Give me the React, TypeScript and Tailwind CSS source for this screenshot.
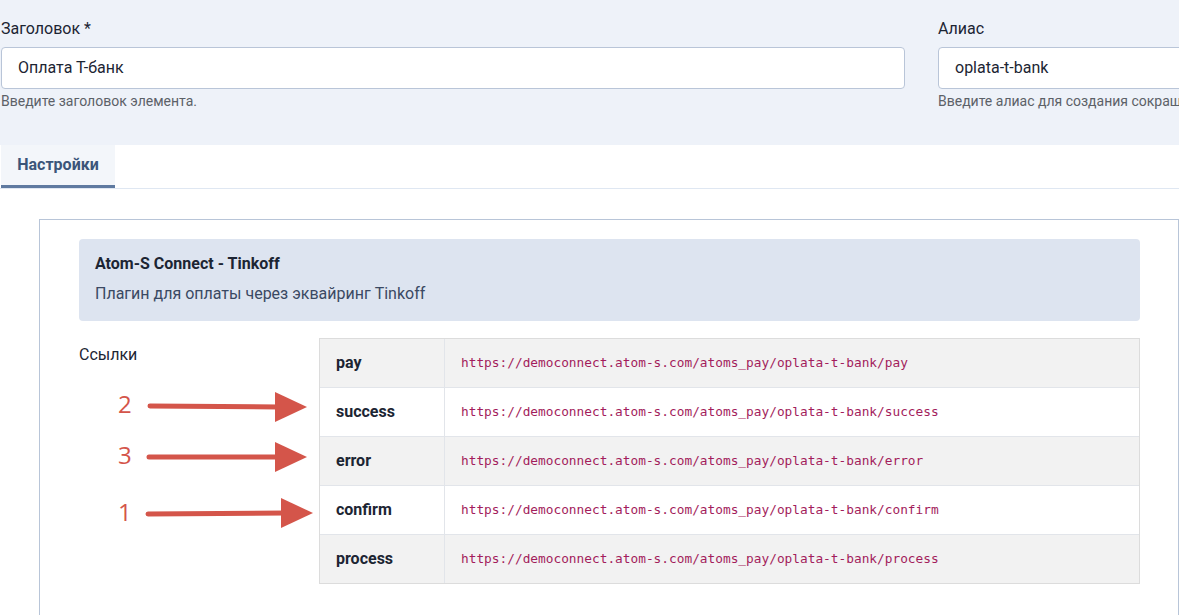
import React from "react";

const links = ["pay", "success", "error", "confirm", "process"];
const base = "https://democonnect.atom-s.com/atoms_pay/oplata-t-bank/";

function Annotations() {
  const red = "#d4554a";
  const arrows = [
    { n: "2", ny: 413, x1: 150, y1: 406, x2: 307, y2: 407, nx: 118 },
    { n: "3", ny: 464, x1: 149, y1: 457, x2: 307, y2: 457, nx: 118 },
    { n: "1", ny: 521, x1: 148, y1: 514, x2: 313, y2: 513, nx: 118 },
  ];
  return (
    <svg
      className="absolute left-0 top-0 pointer-events-none"
      width={1179}
      height={615}
      viewBox="0 0 1179 615"
    >
      {arrows.map((a) => (
        <g key={a.n}>
          <text
            x={a.nx}
            y={a.ny}
            fill={red}
            fontSize={24}
            fontFamily="'Open Sans', sans-serif"
          >
            {a.n}
          </text>
          <line
            x1={a.x1}
            y1={a.y1}
            x2={a.x2 - 28}
            y2={a.y2}
            stroke={red}
            strokeWidth={5}
            strokeLinecap="round"
          />
          <polygon
            points={`${a.x2 - 32},${a.y2 - 15} ${a.x2},${a.y2} ${a.x2 - 32},${a.y2 + 15}`}
            fill={red}
          />
        </g>
      ))}
    </svg>
  );
}

export default function App() {
  return (
    <div className="relative w-[1179px] h-[615px] overflow-hidden bg-white font-['Roboto',sans-serif] text-[#22262a]">
      {/* header fields */}
      <div className="bg-[#eef2f9] h-[145px] pt-[18px] pl-px flex gap-[33px]">
        <div className="w-[904px] shrink-0">
          <div className="text-[16px] leading-[22px] text-[#1c2533]">Заголовок *</div>
          <div className="mt-[7px] h-[42px] bg-white border border-[#b9c5d8] rounded-[4px] flex items-center px-[16px] text-[16px] text-[#1c2533]">
            Оплата Т-банк
          </div>
          <div className="mt-[2px] text-[14px] text-[#5c6168]">Введите заголовок элемента.</div>
        </div>
        <div className="w-[320px] shrink-0">
          <div className="text-[16px] leading-[22px] text-[#1c2533]">Алиас</div>
          <div className="mt-[7px] h-[42px] bg-white border border-[#b9c5d8] rounded-[4px] flex items-center px-[16px] text-[16px] text-[#1c2533]">
            oplata-t-bank
          </div>
          <div className="mt-[2px] text-[14px] text-[#5c6168] whitespace-nowrap">
            Введите алиас для создания сокращ
          </div>
        </div>
      </div>

      {/* tabs */}
      <div className="flex pl-px border-b border-[#dfe7f2]">
        <div className="w-[114px] h-[43px] bg-[#f3f6fa] border-b-[3px] border-[#5f7aa0] flex items-center justify-center text-[16px] font-bold text-[#3b5579]">
          Настройки
        </div>
      </div>

      {/* panel */}
      <div className="ml-[39px] mt-[30px] border-t border-l border-r border-[#b8c5d8] pt-[19px] pl-[39px] pr-[38px] h-[400px]">
        <div className="bg-[#dde4f0] rounded-[4px] h-[82px] px-[16px] pt-[15px]">
          <div className="text-[16px] font-bold text-[#1c2533] leading-[20px]">Atom-S Connect - Tinkoff</div>
          <div className="mt-[10px] text-[16px] text-[#3a4963] leading-[20px]">
            Плагин для оплаты через эквайринг Tinkoff
          </div>
        </div>

        <div className="mt-[17px] flex">
          <div className="w-[240px] shrink-0 pt-[5px] text-[16px] text-[#1c2533]">Ссылки</div>
          <div className="flex-1 border border-[#dcdcdc]">
            {links.map((k, i) => (
              <div
                key={k}
                className={`flex ${i > 0 ? "h-[49px] border-t border-[#e2e5ea]" : "h-[48px]"} ${
                  i % 2 === 0 ? "bg-[#f2f2f2]" : "bg-white"
                }`}
              >
                <div className="w-[125px] shrink-0 border-r border-[#e2e5ea] flex items-center pl-[16px] text-[16px] font-bold text-[#1c2533]">
                  {k}
                </div>
                <div className="flex items-center pl-[16px] font-['DejaVu_Sans_Mono',monospace] text-[12.8px] text-[#a31d5c]">
                  {base + k}
                </div>
              </div>
            ))}
          </div>
        </div>
      </div>

      <Annotations />
    </div>
  );
}
